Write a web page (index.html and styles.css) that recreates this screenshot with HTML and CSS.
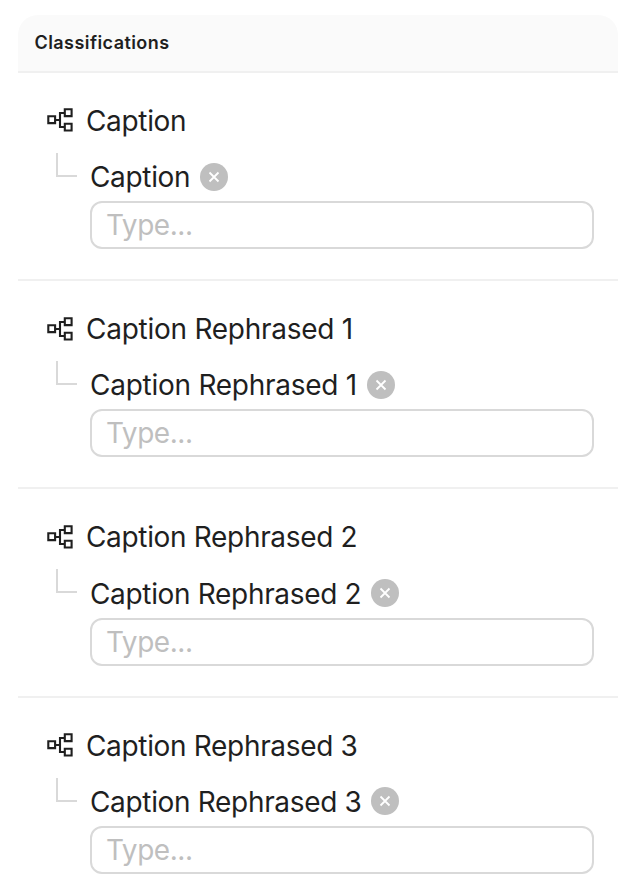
FILE: index.html
```html
<!DOCTYPE html>
<html lang="en">
<head>
<meta charset="utf-8">
<title>Classifications</title>
<link rel="stylesheet" href="styles.css">
</head>
<body>
<svg width="0" height="0" class="defs">
  <symbol id="tree" viewBox="0 0 26 24"><path d="M1.300 8.300h6.800v6.800H1.300zM17.800 1.300h6.800v6.800h-6.800zM17.800 15.700h6.800v6.800h-6.800zM8 12h5M17.500 5H13v14h4.500" fill="none" stroke="currentColor" stroke-width="2.100"/></symbol>
  <symbol id="close" viewBox="0 0 28 28"><circle cx="14" cy="14" r="14" fill="#bfbfbf"/><path d="M9.500 9.500l9 9M18.500 9.500l-9 9" stroke="#fff" stroke-width="1.800"/></symbol>
</svg>
<main class="panel">
  <header class="panel-header">Classifications</header>
  <section class="group">
    <h2 class="title"><svg class="tree"><use href="#tree"/></svg><span>Caption</span></h2>
    <div class="child"><i class="branch"></i><div class="field"><div class="label"><span>Caption</span><svg class="close"><use href="#close"/></svg></div><input placeholder="Type..."></div></div>
  </section>
  <section class="group">
    <h2 class="title"><svg class="tree"><use href="#tree"/></svg><span class="with-one">Caption Rephrased 1</span></h2>
    <div class="child"><i class="branch"></i><div class="field"><div class="label"><span class="with-one">Caption Rephrased 1</span><svg class="close"><use href="#close"/></svg></div><input placeholder="Type..."></div></div>
  </section>
  <section class="group">
    <h2 class="title"><svg class="tree"><use href="#tree"/></svg><span>Caption Rephrased 2</span></h2>
    <div class="child"><i class="branch"></i><div class="field"><div class="label"><span>Caption Rephrased 2</span><svg class="close"><use href="#close"/></svg></div><input placeholder="Type..."></div></div>
  </section>
  <section class="group">
    <h2 class="title"><svg class="tree"><use href="#tree"/></svg><span>Caption Rephrased 3</span></h2>
    <div class="child"><i class="branch"></i><div class="field"><div class="label"><span>Caption Rephrased 3</span><svg class="close"><use href="#close"/></svg></div><input placeholder="Type..."></div></div>
  </section>
</main>
</body>
</html>
```
FILE: styles.css
```css
* { box-sizing: border-box; }
body { margin: 0; background: #fff; color: #1f1f1f; font-family: Inter, sans-serif; height: 894px; overflow: hidden; }
.defs { display: none; }
.panel { width: 600px; margin: 15px 0 0 18px; }
.panel-header { height: 58px; padding: 0 16.500px; border-bottom: 2px solid #f0f0f0; border-radius: 20px 20px 0 0; background: #fafafa; font-size: 18px; font-weight: 600; letter-spacing: .43px; line-height: 56px; }
.group { height: 208.200px; padding: 28px 24px 0 29px; border-bottom: 2px solid #f0f0f0; }
.group:last-child { border-bottom: 0; }
.title { display: flex; align-items: center; height: 40px; margin: 0; gap: 13px; font-size: 28px; font-weight: 400; letter-spacing: -.33px; }
.tree { width: 26px; height: 24px; margin-top: -1.200px; }
.child { display: flex; padding-left: 9px; }
.branch { width: 21px; height: 24px; margin: 12px 13px 0 0; border-left: 2px solid #d9d9d9; border-bottom: 2px solid #d9d9d9; }
.field { flex: 1; padding-top: 16.200px; }
.label { display: flex; align-items: center; gap: 9.800px; height: 40px; font-size: 28px; letter-spacing: -.33px; }
.with-one { letter-spacing: -.26px; }
.close { width: 28px; height: 28px; margin-top: -.800px; }
input { display: block; width: 100%; height: 48px; margin: 4px 0 0; padding: 0 14px; border: 2px solid #d9d9d9; border-radius: 12px; background: #fff; font: 28px Inter, sans-serif; letter-spacing: -.45px; }
input::placeholder { color: #bfbfbf; opacity: 1; }
```
